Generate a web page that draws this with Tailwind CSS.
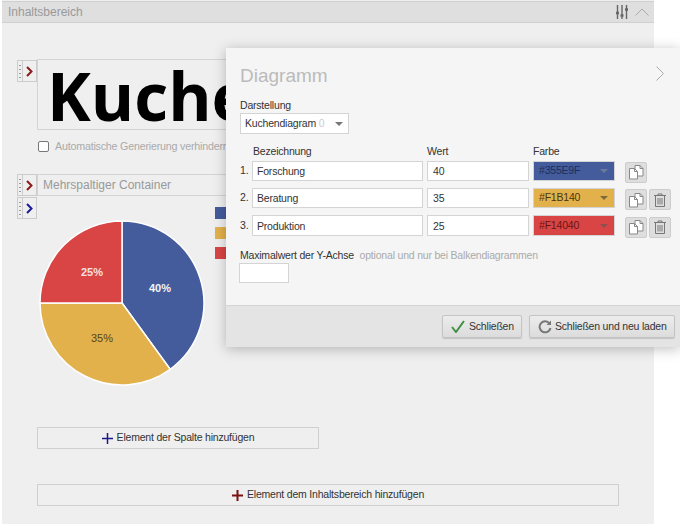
<!DOCTYPE html>
<html lang="de">
<head>
  <meta charset="UTF-8">
  <title>Diagramm</title>
  <script src="https://cdn.jsdelivr.net/npm/@tailwindcss/browser@4"></script>
</head>
<body class="bg-white font-['Liberation_Sans',Arial,sans-serif] text-[10.500px] tracking-[-0.2px] text-[#333]">
  <div class="relative w-[680px] h-[524px] overflow-hidden">

    <!-- Inhaltsbereich -->
    <main class="ml-[2px] w-[652px] h-[524px] bg-[#efefef] pt-px">
      <header class="h-[22px] bg-[#dfdfdf] border-y border-[#cfcfcf] flex items-center justify-between pl-[6px] pr-[5px]">
        <span class="text-[#999] text-[12px] tracking-normal">Inhaltsbereich</span>
        <span class="flex items-center gap-[6px]">
          <svg width="14" height="14" viewBox="0 0 14 14" fill="none" stroke="#666" stroke-width="1.4">
            <path d="M2.500 0v14M7 0v14M11.500 0v14"/>
            <path d="M1 8h3M5.500 10.500h3M10 4.500h3" stroke-width="2.600"/>
          </svg>
          <svg width="14" height="8" viewBox="0 0 14 8" fill="none" stroke="#aaa" stroke-width="1"><path d="M0.500 7.500L7 1l6.500 6.500"/></svg>
        </span>
      </header>

      <div class="pl-[15px] pt-[36px]">
        <div class="flex items-start">
          <div class="w-[20px] h-[22px] mt-px border border-[#ccc] flex">
            <span class="w-[5px] border-r border-[#ccc] flex items-center justify-center">
              <svg width="2" height="14" viewBox="0 0 2 14" fill="#999"><path d="M0 1h2v1H0zM0 5h2v1H0zM0 9h2v1H0zM0 13h2v1H0z"/></svg>
            </span>
            <span class="flex-1 flex items-center justify-center">
              <svg width="7" height="11" viewBox="0 0 7 11" fill="none" stroke="#8b1a1a" stroke-width="2"><path d="M1 1l4.500 4.500L1 10"/></svg>
            </span>
          </div>
          <div class="w-[400px] h-[71px] border border-[#d4d4d4] overflow-hidden pl-[9px] font-['Open_Sans',sans-serif] font-bold text-[66px] tracking-normal leading-[70px] text-black">Kuchendiagramm</div>
        </div>

        <label class="flex items-center ml-[21px] mt-[9px] h-[14px] text-[#aaa] text-[10.700px]">
          <span class="w-[11px] h-[11px] border border-[#777] rounded-[2px] bg-white mr-[6px]"></span>
          Automatische Generierung verhindern
        </label>

        <div class="flex mt-[21px]">
          <div class="w-[20px] h-[22px] border border-[#ccc] flex">
            <span class="w-[5px] border-r border-[#ccc] flex items-center justify-center">
              <svg width="2" height="14" viewBox="0 0 2 14" fill="#999"><path d="M0 1h2v1H0zM0 5h2v1H0zM0 9h2v1H0zM0 13h2v1H0z"/></svg>
            </span>
            <span class="flex-1 flex items-center justify-center">
              <svg width="7" height="11" viewBox="0 0 7 11" fill="none" stroke="#8b1a1a" stroke-width="2"><path d="M1 1l4.500 4.500L1 10"/></svg>
            </span>
          </div>
          <div class="w-[400px] h-[22px] border border-[#d4d4d4] pl-[5px] leading-[20px] text-[12px] tracking-normal text-[#999]">Mehrspaltiger Container</div>
        </div>

        <div class="w-[20px] h-[22px] mt-px border border-[#ccc] flex">
          <span class="w-[5px] border-r border-[#ccc] flex items-center justify-center">
            <svg width="2" height="14" viewBox="0 0 2 14" fill="#999"><path d="M0 1h2v1H0zM0 5h2v1H0zM0 9h2v1H0zM0 13h2v1H0z"/></svg>
          </span>
          <span class="flex-1 flex items-center justify-center">
            <svg width="7" height="11" viewBox="0 0 7 11" fill="none" stroke="#1a1a9b" stroke-width="2"><path d="M1 1l4.500 4.500L1 10"/></svg>
          </span>
        </div>

        <div class="flex h-[208px]">
          <svg class="-mt-[4px] ml-[18px] shrink-0 tracking-normal" width="176" height="176" viewBox="0 0 176 176">
            <g stroke="#fff" stroke-width="1.500">
              <path d="M87 88V6A82 82 0 0 1 135.200 154.300Z" fill="#445c9c"/>
              <path d="M87 88L135.200 154.300A82 82 0 0 1 5 88Z" fill="#e3b14c"/>
              <path d="M87 88H5A82 82 0 0 1 87 6Z" fill="#d94545"/>
            </g>
            <text x="125" y="77" text-anchor="middle" font-size="11" fill="#f4f4f4" font-weight="bold">40%</text>
            <text x="57" y="61" text-anchor="middle" font-size="11" fill="#f8e0e0" font-weight="bold">25%</text>
            <text x="67" y="127" text-anchor="middle" font-size="11" fill="#5a4516">35%</text>
          </svg>
          <div class="ml-[4px] -mt-[12px] flex flex-col gap-[8px]">
            <span class="w-[12px] h-[12px] bg-[#445c9c]"></span>
            <span class="w-[12px] h-[12px] bg-[#e3b14c]"></span>
            <span class="w-[12px] h-[12px] bg-[#d94545]"></span>
          </div>
        </div>

        <button class="flex items-center justify-center gap-[4px] ml-[20px] w-[282px] h-[22px] border border-[#d0d0d0] text-[#333]">
          <svg width="11" height="11" viewBox="0 0 11 11" stroke="#1a1a8b" stroke-width="1.500"><path d="M5.500 0v11M0 5.500h11"/></svg>
          Element der Spalte hinzufügen
        </button>
        <button class="flex items-center justify-center gap-[4px] ml-[20px] mt-[35px] w-[582px] h-[22px] border border-[#d0d0d0] text-[#333]">
          <svg width="11" height="11" viewBox="0 0 11 11" stroke="#7b1010" stroke-width="2"><path d="M5.500 0v11M0 5.500h11"/></svg>
          Element dem Inhaltsbereich hinzufügen
        </button>
      </div>
    </main>

    <!-- Dialog -->
    <section class="absolute left-[226px] top-[48px] w-[454px] h-[299px] bg-[#f5f5f5] shadow-[0_2px_12px_rgba(0,0,0,0.25)] flex flex-col">
      <div class="flex-1 pl-[14px] pt-[15px] relative">
        <h2 class="text-[#bbb] text-[19px] tracking-normal leading-[26px]">Diagramm</h2>
        <svg class="absolute left-[430px] top-[18px]" width="8" height="15" viewBox="0 0 8 15" fill="none" stroke="#aaa" stroke-width="1"><path d="M0.500 0.500l7 7-7 7"/></svg>

        <div class="mt-[9px] leading-[14px]">Darstellung</div>
        <div class="mt-px w-[109px] h-[21px] bg-white border border-[#d4d4d4] flex items-center pl-[4px] pr-[5px] justify-between whitespace-nowrap">
          <span>Kuchendiagram <span class="text-[#ccc]">0</span></span>
          <span class="w-0 h-0 border-x-[4px] border-x-transparent border-t-[4px] border-t-[#777]"></span>
        </div>

        <div class="flex mt-[10px] leading-[14px]">
          <span class="ml-[13px] w-[174px]">Bezeichnung</span>
          <span class="w-[106px]">Wert</span>
          <span>Farbe</span>
        </div>

        <div class="mt-[3px] flex flex-col gap-[7px]">
          <div class="flex items-center h-[20px]">
            <span class="w-[12px]">1.</span>
            <span class="w-[171px] h-[20px] bg-white border border-[#d4d4d4] pl-[4px] leading-[18px]">Forschung</span>
            <span class="ml-[4px] w-[102px] h-[20px] bg-white border border-[#d4d4d4] pl-[5px] leading-[18px]">40</span>
            <span class="ml-[4px] w-[82px] h-[20px] bg-[#445c9c] border border-[#d4d4d4] pl-[5px] pr-[6px] flex items-center justify-between text-[#1c2f5c]">#355E9F<span class="w-0 h-0 border-x-[4px] border-x-transparent border-t-[4px] border-t-[#6b7a9c]"></span></span>
            <span class="ml-[10px] w-[22px] h-[21px] mt-[2px] bg-[#dedede] border border-[#ccc] rounded-[2px] flex items-center justify-center">
              <svg width="16" height="16" viewBox="0 0 16 16" fill="#fff" stroke="#888" stroke-width="1"><path d="M7 1.500h5l3 3v7.500H7z"/><path d="M12 1.500v3h3" fill="none"/><path d="M1.500 4.500h5l3 3v7.500h-8z"/><path d="M6.500 4.500v3h3" fill="none"/></svg>
            </span>
          </div>
          <div class="flex items-center h-[20px]">
            <span class="w-[12px]">2.</span>
            <span class="w-[171px] h-[20px] bg-white border border-[#d4d4d4] pl-[4px] leading-[18px]">Beratung</span>
            <span class="ml-[4px] w-[102px] h-[20px] bg-white border border-[#d4d4d4] pl-[5px] leading-[18px]">35</span>
            <span class="ml-[4px] w-[82px] h-[20px] bg-[#e3b14c] border border-[#d4d4d4] pl-[5px] pr-[6px] flex items-center justify-between text-[#4a3610]">#F1B140<span class="w-0 h-0 border-x-[4px] border-x-transparent border-t-[4px] border-t-[#7a6a3c]"></span></span>
            <span class="ml-[10px] w-[22px] h-[21px] mt-[3px] bg-[#dedede] border border-[#ccc] rounded-[2px] flex items-center justify-center">
              <svg width="16" height="16" viewBox="0 0 16 16" fill="#fff" stroke="#888" stroke-width="1"><path d="M7 1.500h5l3 3v7.500H7z"/><path d="M12 1.500v3h3" fill="none"/><path d="M1.500 4.500h5l3 3v7.500h-8z"/><path d="M6.500 4.500v3h3" fill="none"/></svg>
            </span>
            <span class="ml-[2px] w-[22px] h-[21px] mt-[3px] bg-[#dedede] border border-[#ccc] rounded-[2px] flex items-center justify-center">
              <svg width="12" height="14" viewBox="0 0 12 14" fill="none" stroke="#777" stroke-width="1"><path d="M0 2.500h12M4 2.500V1h4v1.500M1.500 2.500v11h9v-11M4 5v6.500M6 5v6.500M8 5v6.500"/></svg>
            </span>
          </div>
          <div class="flex items-center h-[21px]">
            <span class="w-[12px]">3.</span>
            <span class="w-[171px] h-[21px] bg-white border border-[#d4d4d4] pl-[4px] leading-[20px]">Produktion</span>
            <span class="ml-[4px] w-[102px] h-[21px] bg-white border border-[#d4d4d4] pl-[5px] leading-[20px]">25</span>
            <span class="ml-[4px] w-[82px] h-[21px] bg-[#d94545] border border-[#d4d4d4] pl-[5px] pr-[6px] flex items-center justify-between text-[#6b1414]">#F14040<span class="w-0 h-0 border-x-[4px] border-x-transparent border-t-[4px] border-t-[#8c5050]"></span></span>
            <span class="ml-[10px] w-[22px] h-[21px] mt-[3px] bg-[#dedede] border border-[#ccc] rounded-[2px] flex items-center justify-center">
              <svg width="16" height="16" viewBox="0 0 16 16" fill="#fff" stroke="#888" stroke-width="1"><path d="M7 1.500h5l3 3v7.500H7z"/><path d="M12 1.500v3h3" fill="none"/><path d="M1.500 4.500h5l3 3v7.500h-8z"/><path d="M6.500 4.500v3h3" fill="none"/></svg>
            </span>
            <span class="ml-[2px] w-[22px] h-[21px] mt-[3px] bg-[#dedede] border border-[#ccc] rounded-[2px] flex items-center justify-center">
              <svg width="12" height="14" viewBox="0 0 12 14" fill="none" stroke="#777" stroke-width="1"><path d="M0 2.500h12M4 2.500V1h4v1.500M1.500 2.500v11h9v-11M4 5v6.500M6 5v6.500M8 5v6.500"/></svg>
            </span>
          </div>
        </div>

        <div class="mt-[12px] leading-[14px]">Maximalwert der Y-Achse <span class="ml-[3px] text-[#aaa]">optional und nur bei Balkendiagrammen</span></div>
        <div class="-ml-px mt-px w-[50px] h-[20px] bg-white border border-[#d4d4d4]"></div>
      </div>

      <footer class="h-[42px] bg-[#e4e4e4] border-t border-[#d4d4d4] flex items-start justify-end gap-[7px] pt-[9px] pr-[5px]">
        <button class="flex items-center gap-[4px] w-[80px] h-[23px] pl-[8px] bg-gradient-to-b from-[#ececec] to-[#dcdcdc] border border-[#c4c4c4] rounded-[2px] shadow-[0_1px_1px_rgba(0,0,0,0.15)] whitespace-nowrap">
          <svg width="14" height="13" viewBox="0 0 14 13" fill="none" stroke="#3f9142" stroke-width="2"><path d="M1 7l4 5L13 1"/></svg>
          Schließen
        </button>
        <button class="flex items-center gap-[3px] w-[146px] h-[23px] pl-[8px] bg-gradient-to-b from-[#ececec] to-[#dcdcdc] border border-[#c4c4c4] rounded-[2px] shadow-[0_1px_1px_rgba(0,0,0,0.15)] whitespace-nowrap">
          <svg width="14" height="14" viewBox="0 0 14 14" fill="none" stroke="#777" stroke-width="2"><path d="M11.500 3.500A5.500 5.500 0 1 0 12.500 8"/><path d="M13 0.500v4.500H8.500z" fill="#777" stroke="none"/></svg>
          Schließen und neu laden
        </button>
      </footer>
    </section>
  </div>
</body>
</html>
